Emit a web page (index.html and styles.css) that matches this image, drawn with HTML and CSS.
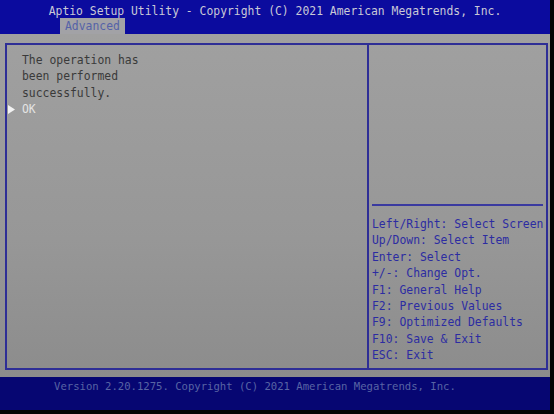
FILE: index.html
```html
<!DOCTYPE html>
<html lang="en">

<head>
  <meta charset="UTF-8" />
  <meta name="viewport" content="width=device-width, initial-scale=1.0" />
  <title>Aptio Setup Utility</title>
  <link rel="stylesheet" href="styles.css">
</head>

<body>
  <div class="screen">
    <div class="top-bar">
      <div class="title">Aptio Setup Utility - Copyright (C) 2021 American Megatrends, Inc.</div>
      <div class="tabs">
        <div class="tab active">Advanced</div>
      </div>
    </div>

    <div class="main">
      <div class="frame">
        <div class="left-panel">
          <div class="message">The operation has<br>been performed<br>successfully.</div>
          <div class="option">
            <svg class="arrow" width="7" height="9" viewBox="0 0 7 9"><path d="M0 0 L7 4.5 L0 9 Z" fill="#f2f2f2"/></svg>
            <span class="option-label">OK</span>
          </div>
        </div>
        <div class="right-panel">
          <div class="item-help"></div>
          <div class="keys">
            <div>Left/Right: Select Screen</div>
            <div>Up/Down: Select Item</div>
            <div>Enter: Select</div>
            <div>+/-: Change Opt.</div>
            <div>F1: General Help</div>
            <div>F2: Previous Values</div>
            <div>F9: Optimized Defaults</div>
            <div>F10: Save &amp; Exit</div>
            <div>ESC: Exit</div>
          </div>
        </div>
      </div>
    </div>

    <div class="bottom-bar">Version 2.20.1275. Copyright (C) 2021 American Megatrends, Inc.</div>
  </div>
</body>

</html>
```

FILE: styles.css
```css
html,
body {
  margin: 0;
  background: #050505;
}

body {
  width: 554px;
  height: 414px;
  overflow: hidden;
  font-family: "DejaVu Sans Mono", "Liberation Mono", monospace;
  font-size: 11.4px;
}

.screen {
  width: 550px;
  height: 410px;
  display: flex;
  flex-direction: column;
}

/* header */
.top-bar {
  height: 34px;
  background: #0b0b9e;
  display: flex;
  flex-direction: column;
}

.title {
  color: #c9c9d6;
  text-align: center;
  line-height: 16px;
  padding-top: 3px;
}

.tabs {
  display: flex;
  padding-left: 60px;
  margin-top: -1px;
}

.tab {
  height: 16px;
  line-height: 16px;
  padding: 0 5px;
  color: #5562a8;
}

.tab.active {
  background: #a2a2a6;
}

/* body area */
.main {
  flex: 1;
  background: linear-gradient(to bottom, #a0a0a0, #979797 60%, #8c8c8c);
  padding: 9px 2px 7px 5px;
  display: flex;
}

.frame {
  flex: 1;
  border: 2px solid #2e2e96;
  display: grid;
  grid-template-columns: 362px 1fr;
}

.left-panel {
  border-right: 2px solid #2e2e96;
  padding: 7px 0 0 15px;
  line-height: 16.4px;
}

.message {
  color: #3a3a3a;
}

.option {
  display: flex;
  align-items: center;
  margin-left: -14px;
}

.arrow {
  margin-right: 7px;
}

.option-label {
  color: #e4e4e4;
}

.right-panel {
  display: flex;
  flex-direction: column;
  padding: 0 3px 0 3px;
}

.item-help {
  height: 159px;
  border-bottom: 2px solid #3a3aa0;
}

.keys {
  padding-top: 10px;
  color: #2c2ca2;
  line-height: 16.4px;
  white-space: nowrap;
}

/* footer */
.bottom-bar {
  height: 33px;
  background: #060672;
  color: #5864a4;
  font-size: 10.6px;
  line-height: 18px;
  padding-left: 54px;
  box-sizing: border-box;
}
```
